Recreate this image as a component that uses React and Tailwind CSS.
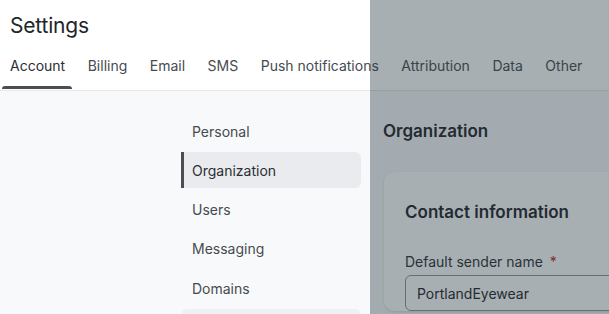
const TABS = ['Account', 'Billing', 'Email', 'SMS', 'Push notifications', 'Attribution', 'Data', 'Other'];
const NAV = ['Personal', 'Organization', 'Users', 'Messaging', 'Domains', ''];

export default function App() {
  return (
    <div className="relative h-[314px] w-[609px] overflow-hidden bg-[#f8f9fa] text-[#212529]" style={{ fontFamily: 'Inter, "Noto Sans", sans-serif' }}>
      {/* Header */}
      <div className="bg-white border-b border-[#e5e7ea]">
        <h1 className="pl-[10px] pt-[12px] text-[21px] leading-[28px] font-normal tracking-[-0.2px]">Settings</h1>
        <div className="flex gap-[6.5px] pl-[2px]">
          {TABS.map((t, i) => (
            <div key={t} className="relative px-2 h-[50px] flex items-center whitespace-nowrap">
              <span className={`text-[14px] ${i === 0 ? 'text-[#2b2f33]' : 'text-[#464b50]'}`}>{t}</span>
              {i === 0 && <span className="absolute left-0 right-[1px] bottom-[1px] h-[3px] rounded-t-sm bg-[#4a4e52]" />}
            </div>
          ))}
        </div>
      </div>

      {/* Body */}
      <div className="flex pt-[22px]">
        <div className="w-[181px] shrink-0" />
        <nav className="w-[180px] shrink-0 flex flex-col gap-[3.25px]">
          {NAV.map((n, i) => {
            const cls =
              i === 1
                ? 'bg-[#e9ebee] border-l-[3px] border-[#4a4e52] pl-[8px] rounded-r-md text-[#2b2f33]'
                : i === 5
                ? 'bg-[#eef0f2] rounded-md pl-[11px] text-[#464b50]'
                : 'pl-[11px] text-[#464b50]';
            return (
              <div key={i} className={`h-[36px] flex items-center text-[14px] ${cls}`}>
                {n}
              </div>
            );
          })}
        </nav>
        <main className="ml-[10px] flex-1 pl-[12px]">
          <h2 className="text-[17px] leading-[24px] font-semibold text-[#1f2327] mt-[6px]">Organization</h2>
          <div className="mt-[29px] ml-[1px] w-[300px] rounded-[10px] bg-white shadow-[0_1px_3px_rgba(0,0,0,0.12)] px-[21px] pt-[28px]">
            <h3 className="text-[17px] leading-[24px] font-semibold text-[#1f2327]">Contact information</h3>
            <div className="mt-[28px] text-[14px] text-[#2b2f33] leading-[20px]">
              Default sender name <span className="text-[#c0262d] ml-[3px]">*</span>
            </div>
            <div className="mt-[3px] h-[36px] rounded-[6px] border border-[#8e9399] bg-white flex items-center pl-[11px] text-[14px] text-[#1f2327]">
              PortlandEyewear
            </div>
          </div>
        </main>
      </div>

      {/* Overlay */}
      <div className="absolute top-0 bottom-0 left-[370px] right-0 bg-[rgba(37,55,65,0.4)]" />
    </div>
  );
}
